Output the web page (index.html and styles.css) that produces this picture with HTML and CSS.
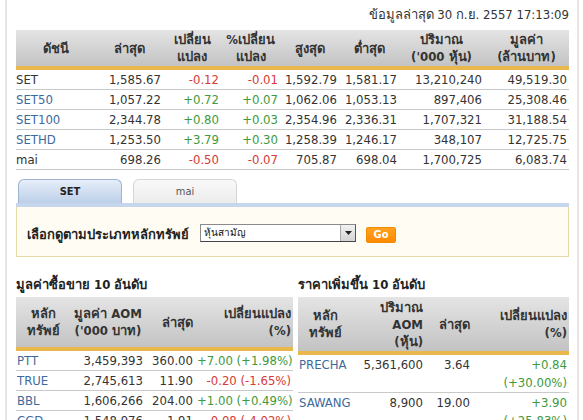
FILE: index.html
```html
<!DOCTYPE html>
<html lang="th">
<head>
<meta charset="utf-8">
<title>SET Market Data</title>
<link rel="stylesheet" href="styles.css">
</head>
<body>
<div class="page">
  <div class="updated">ข้อมูลล่าสุด 30 ก.ย. 2557 17:13:09</div>

  <table class="idx">
    <colgroup>
      <col style="width:79px"><col style="width:68px"><col style="width:58px"><col style="width:59px">
      <col style="width:59px"><col style="width:60px"><col style="width:85px"><col style="width:85px">
    </colgroup>
    <thead>
      <tr>
        <th>ดัชนี</th><th>ล่าสุด</th><th>เปลี่ยน<br>แปลง</th><th>%เปลี่ยน<br>แปลง</th>
        <th>สูงสุด</th><th>ต่ำสุด</th><th>ปริมาณ<br>('000 หุ้น)</th><th>มูลค่า<br>(ล้านบาท)</th>
      </tr>
    </thead>
    <tbody>
      <tr><td class="name">SET</td><td>1,585.67</td><td class="neg">-0.12</td><td class="neg">-0.01</td><td>1,592.79</td><td>1,581.17</td><td>13,210,240</td><td>49,519.30</td></tr>
      <tr><td class="name link">SET50</td><td>1,057.22</td><td class="pos">+0.72</td><td class="pos">+0.07</td><td>1,062.06</td><td>1,053.13</td><td>897,406</td><td>25,308.46</td></tr>
      <tr><td class="name link">SET100</td><td>2,344.78</td><td class="pos">+0.80</td><td class="pos">+0.03</td><td>2,354.96</td><td>2,336.31</td><td>1,707,321</td><td>31,188.54</td></tr>
      <tr><td class="name link">SETHD</td><td>1,253.50</td><td class="pos">+3.79</td><td class="pos">+0.30</td><td>1,258.39</td><td>1,246.17</td><td>348,107</td><td>12,725.75</td></tr>
      <tr><td class="name">mai</td><td>698.26</td><td class="neg">-0.50</td><td class="neg">-0.07</td><td>705.87</td><td>698.04</td><td>1,700,725</td><td>6,083.74</td></tr>
    </tbody>
  </table>

  <div class="tabs">
    <div class="tab active">SET</div>
    <div class="tab">mai</div>
  </div>
  <div class="filter">
    <span class="filter-label">เลือกดูตามประเภทหลักทรัพย์</span>
    <div class="select">
      <span class="select-value">หุ้นสามัญ</span>
      <span class="select-btn"><svg width="7" height="4" viewBox="0 0 7 4"><path d="M0 0h7L3.5 4z" fill="#222"/></svg></span>
    </div>
    <button class="go">Go</button>
  </div>

  <div class="bottom">
    <section class="panel">
      <h3 class="title">มูลค่าซื้อขาย 10 อันดับ</h3>
      <table class="top left">
        <colgroup>
          <col style="width:55px"><col style="width:74px"><col style="width:50px"><col style="width:98px">
        </colgroup>
        <thead>
          <tr><th class="c">หลัก<br>ทรัพย์</th><th class="c">มูลค่า AOM<br>('000 บาท)</th><th>ล่าสุด</th><th>เปลี่ยนแปลง<br>(%)</th></tr>
        </thead>
        <tbody>
          <tr><td class="name link">PTT</td><td>3,459,393</td><td>360.00</td><td class="pos">+7.00 (+1.98%)</td></tr>
          <tr><td class="name link">TRUE</td><td>2,745,613</td><td>11.90</td><td class="neg">-0.20 (-1.65%)</td></tr>
          <tr><td class="name link">BBL</td><td>1,606,266</td><td>204.00</td><td class="pos">+1.00 (+0.49%)</td></tr>
          <tr><td class="name link">CGD</td><td>1,548,976</td><td>1.91</td><td class="neg">-0.08 (-4.02%)</td></tr>
        </tbody>
      </table>
    </section>
    <section class="panel">
      <h3 class="title">ราคาเพิ่มขึ้น 10 อันดับ</h3>
      <table class="top right">
        <colgroup>
          <col style="width:54px"><col style="width:73px"><col style="width:47px"><col style="width:97px">
        </colgroup>
        <thead>
          <tr><th class="c">หลัก<br>ทรัพย์</th><th>ปริมาณ<br>AOM<br>(หุ้น)</th><th>ล่าสุด</th><th>เปลี่ยนแปลง<br>(%)</th></tr>
        </thead>
        <tbody>
          <tr><td class="name link">PRECHA</td><td>5,361,600</td><td>3.64</td><td class="pos">+0.84<br>(+30.00%)</td></tr>
          <tr><td class="name link">SAWANG</td><td>8,900</td><td>19.00</td><td class="pos">+3.90<br>(+25.83%)</td></tr>
        </tbody>
      </table>
    </section>
  </div>
</div>
</body>
</html>
```

FILE: styles.css
```css
* { box-sizing: border-box; }
html, body { margin: 0; padding: 0; background: #fff; }
body {
  font-family: Tahoma, "DejaVu Sans Condensed", "DejaVu Sans", sans-serif;
  font-size: 13px;
  color: #333;
  height: 420px;
  overflow: hidden;
}
.page {
  margin-left: 5px;
  width: 574px;
  min-height: 420px;
  border-left: 2px solid #e6e6e6;
  border-right: 2px solid #e6e6e6;
  padding: 0 8px 0 9px;
}
.updated {
  height: 30px;
  line-height: 30px;
  text-align: right;
  color: #333;
}

table { border-collapse: separate; border-spacing: 0; table-layout: fixed; }
th {
  font-weight: bold;
  color: #333;
  line-height: 17px;
  background: linear-gradient(#e4e4e4, #c3c3c3);
  border-bottom: 4px solid #e8b84c;
  padding: 0 2px;
  vertical-align: middle;
}
td {
  padding: 0 2px;
  border-bottom: 1px solid #c9c9c9;
  text-align: right;
  white-space: nowrap;
}
.name { text-align: left; padding-left: 0; }
.link { color: #3d6a9e; }
.pos { color: #3e9a3e; }
.neg { color: #d63a35; }

.idx { width: 553px; }
.idx th { height: 40px; text-align: center; }
.idx td { height: 20px; line-height: 19px; }

.tabs {
  margin-top: 9px;
  display: flex;
  gap: 11px;
  padding-left: 2px;
  border-bottom: 4px solid #c6d6ec;
}
.tab {
  width: 104px;
  height: 24px;
  line-height: 24px;
  text-align: center;
  font-size: 11px;
  color: #555;
  background: linear-gradient(#f9f9f9, #ececec);
  border: 1px solid #d6d6d6;
  border-bottom: none;
  border-radius: 6px 6px 0 0;
}
.tab.active {
  font-weight: bold;
  color: #222;
  background: linear-gradient(#e6eef9, #bccfe9);
  border-color: #9fb4d0;
}
.filter {
  height: 50px;
  display: flex;
  align-items: center;
  padding-left: 10px;
  padding-top: 3px;
  background: #fffdf3;
  border: 1px solid #e6dba6;
  border-top: none;
}
.filter-label {
  width: 173px;
  font-weight: bold;
  color: #222;
  padding-top: 2px;
}
.select {
  width: 156px;
  height: 18px;
  display: flex;
  align-items: stretch;
  background: #fff;
  border: 1px solid #8a8a8a;
  border-right-color: #555;
  border-bottom-color: #444;
}
.select-value {
  flex: 1;
  font-size: 10px;
  line-height: 16px;
  padding-left: 3px;
  color: #111;
}
.select-btn {
  width: 15px;
  display: flex;
  align-items: center;
  justify-content: center;
  background: linear-gradient(#f2f2f2, #d4d4d4);
  border-left: 1px solid #aaa;
}
.go {
  margin-left: 10px;
  margin-top: 3px;
  width: 30px;
  height: 16px;
  padding: 0;
  border: 1px solid #f08a00;
  border-radius: 2px;
  background: linear-gradient(#ffa21f, #ff8a00);
  color: #fff;
  font-family: inherit;
  font-size: 11px;
  font-weight: bold;
  line-height: 14px;
}

.bottom {
  margin-top: 20px;
  display: grid;
  grid-template-columns: 277px 271px;
  column-gap: 5px;
}
.title {
  margin: 0;
  font-size: 13px;
  font-weight: bold;
  color: #222;
  line-height: 16px;
  height: 20px;
}
.top { width: 100%; }
.top th { text-align: right; }
.top th.c { text-align: center; }
.left th { height: 54px; }
.right th { height: 58px; }
.top td { height: 19px; line-height: 18px; vertical-align: top; }
.left td { padding-top: 1px; }
.right td { padding-top: 1px; padding-bottom: 0; }
.top td.name { padding-left: 1px; }
```
